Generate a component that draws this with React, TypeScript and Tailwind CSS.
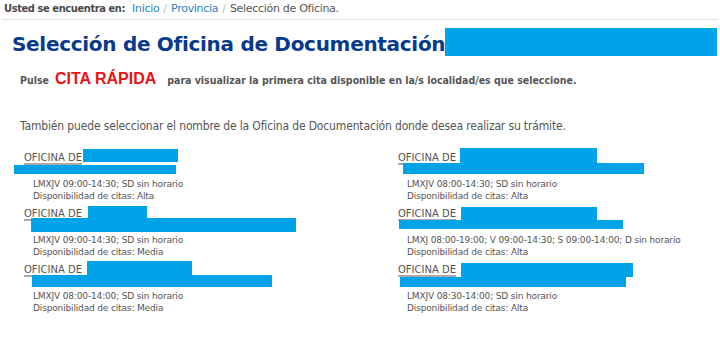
import React from "react";

const BLUE = "bg-[#00a2e8]";

type Entry = {
  hours: string;
  avail: string;
  b1: [number, number, number, number]; // left, top, width, height relative to entry
  b2: [number, number, number, number];
};

const left: Entry[] = [
  { hours: "LMXJV 09:00-14:30; SD sin horario", avail: "Alta", b1: [59, 1, 95, 13], b2: [-10, 17, 162, 9] },
  { hours: "LMXJV 09:00-14:30; SD sin horario", avail: "Media", b1: [64, 2, 59, 13], b2: [7, 14, 265, 14] },
  { hours: "LMXJV 08:00-14:00; SD sin horario", avail: "Media", b1: [63, 1, 105, 14], b2: [8, 15, 240, 12] },
];
const right: Entry[] = [
  { hours: "LMXJV 08:00-14:30; SD sin horario", avail: "Alta", b1: [62, 0, 137, 15], b2: [5, 15, 241, 11] },
  { hours: "LMXJ 08:00-19:00; V 09:00-14:30; S 09:00-14:00; D sin horario", avail: "Alta", b1: [63, 3, 136, 13], b2: [1, 16, 224, 9] },
  { hours: "LMXJV 08:30-14:00; SD sin horario", avail: "Alta", b1: [63, 3, 172, 14], b2: [2, 17, 226, 10] },
];

function Box({ b }: { b: [number, number, number, number] }) {
  return (
    <span
      className={`absolute ${BLUE}`}
      style={{ left: b[0], top: b[1], width: b[2], height: b[3] }}
    />
  );
}

function Office({ e }: { e: Entry }) {
  return (
    <div className="relative h-[56px]">
      <div className="pt-[3px] text-[10px] leading-[13px] text-[#555] underline decoration-[#aaa] decoration-2 underline-offset-2">
        OFICINA DE
      </div>
      <div className="h-[14px]" />
      <div className="pl-[9px] text-[9px] leading-[12px] text-[#555] tracking-[-0.15px]">
        <div>{e.hours}</div>
        <div>Disponibilidad de citas: {e.avail}</div>
      </div>
      <Box b={e.b1} />
      <Box b={e.b2} />
    </div>
  );
}

export default function App() {
  return (
    <div className="w-[720px] h-[360px] bg-white overflow-hidden" style={{ fontFamily: '"DejaVu Sans", Verdana, sans-serif' }}>
      <div className="mx-[2px] h-[20px] border-b border-[#e3e3e3] pl-[2px] flex items-center text-[11px]">
        <span className="font-bold text-[#4a4a4a] tracking-[-0.4px]" style={{ fontFamily: '"DejaVu Sans Condensed", sans-serif' }}>Usted se encuentra en:</span>
        <span className="ml-[7px] text-[#2c7fc0] tracking-[-0.3px]">Inicio</span>
        <span className="mx-[4px] text-[#bbb]">/</span>
        <span className="text-[#2c7fc0] tracking-[-0.3px]">Provincia</span>
        <span className="mx-[4px] text-[#bbb]">/</span>
        <span className="text-[#555] tracking-[-0.3px]">Selección de Oficina.</span>
      </div>

      <div className="relative mt-[10px] pl-[12px] h-[28px] flex items-center">
        <h1 className="text-[20px] font-bold text-[#083a8c] leading-[28px] tracking-[-0.3px]">Selección de Oficina de Documentación</h1>
        <span className={`absolute left-[445px] top-[-2px] w-[272px] h-[28px] ${BLUE}`} />
      </div>

      <div className="mt-[9px] pl-[20px] flex items-baseline text-[10.5px] font-bold text-[#555]" style={{ fontFamily: '"DejaVu Sans Condensed", sans-serif' }}>
        <span>Pulse</span>
        <span className="ml-[6px] text-[16px] text-[#ee1111]" style={{ fontFamily: '"Liberation Sans", Arial, sans-serif' }}>CITA RÁPIDA</span>
        <span className="ml-[11px]">para visualizar la primera cita disponible en la/s localidad/es que seleccione.</span>
      </div>

      <div className="mt-[27px] pl-[20px] text-[12px] leading-[16px] text-[#555] tracking-[-0.15px]" style={{ fontFamily: '"DejaVu Sans Condensed", sans-serif' }}>
        También puede seleccionar el nombre de la Oficina de Documentación donde desea realizar su trámite.
      </div>

      <div className="mt-[14px] grid grid-cols-[398px_1fr]">
        <div className="pl-[24px] flex flex-col">
          {left.map((e, i) => (
            <Office key={i} e={e} />
          ))}
        </div>
        <div className="flex flex-col">
          {right.map((e, i) => (
            <Office key={i} e={e} />
          ))}
        </div>
      </div>
    </div>
  );
}
